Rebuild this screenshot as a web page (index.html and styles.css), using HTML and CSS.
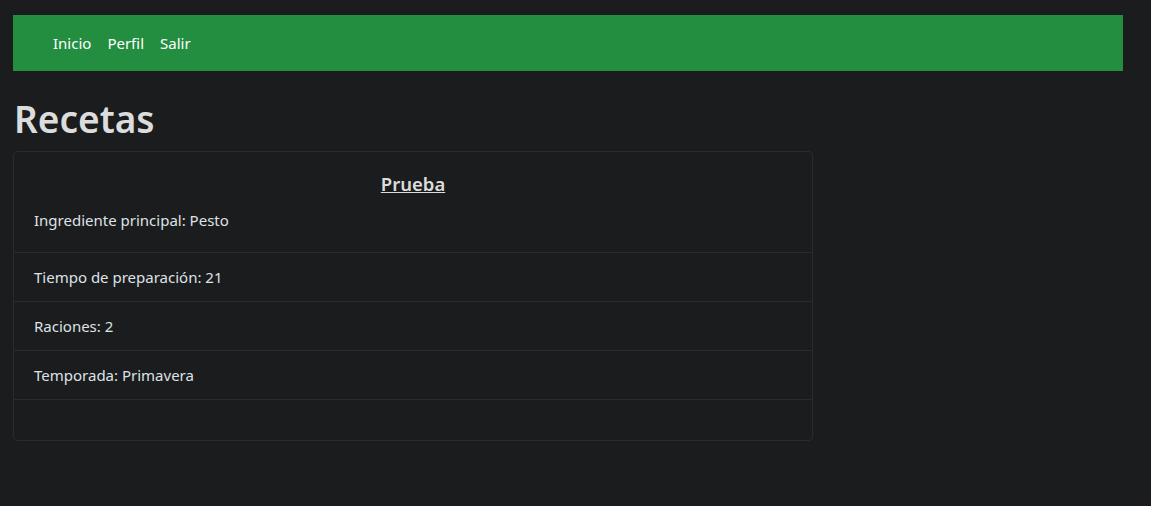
FILE: index.html
```html
<!DOCTYPE html>
<html lang="es">
<head>
<meta charset="utf-8">
<title>Recetas</title>
<link rel="stylesheet" href="styles.css">
</head>
<body>
<div class="page">
  <nav class="navbar">
    <a class="nav-link" href="#">Inicio</a>
    <a class="nav-link" href="#">Perfil</a>
    <a class="nav-link" href="#">Salir</a>
  </nav>
  <h1 class="title">Recetas</h1>
  <div class="card">
    <div class="card-body">
      <h5 class="card-title"><a href="#">Prueba</a></h5>
      <p class="card-text">Ingrediente principal: Pesto</p>
    </div>
    <ul class="list-group">
      <li class="list-item">Tiempo de preparación: 21</li>
      <li class="list-item">Raciones: 2</li>
      <li class="list-item">Temporada: Primavera</li>
    </ul>
    <div class="card-footer"></div>
  </div>
</div>
</body>
</html>
```

FILE: styles.css
```css
* { box-sizing: border-box; }
html, body {
  margin: 0;
  padding: 0;
  background: #1b1c1e;
}
body {
  font-family: "Noto Sans", "Open Sans", sans-serif;
  font-size: 15px;
  line-height: 24px;
  color: #dee2e6;
}
.page {
  width: 1110px;
  margin: 15px 0 0 13px;
}
.navbar {
  background: #238e3f;
  height: 56px;
  display: flex;
  align-items: center;
  padding-left: 32px;
}
.nav-link {
  color: #ffffff;
  text-decoration: none;
  padding: 0 8px;
}
.title {
  font-size: 37px;
  line-height: 48px;
  font-weight: 600;
  color: #dcdcdc;
  margin: 24px 0 8px 1px;
}
.card {
  width: 800px;
  border: 1px solid #2a2b2e;
  border-radius: 4px;
  background: #1b1c1e;
}
.card-body {
  padding: 20px;
}
.card-title {
  margin: 0 0 12px;
  font-size: 18.5px;
  line-height: 24px;
  font-weight: 600;
  text-align: center;
}
.card-title a {
  color: #dcdcdc;
  text-decoration: underline;
}
.card-text {
  margin: 0;
}
.list-group {
  list-style: none;
  margin: 0;
  padding: 0;
}
.list-item {
  padding: 12px 20px;
  border-top: 1px solid #2a2b2e;
}
.list-item:last-child {
  border-bottom: 1px solid #2a2b2e;
}
.card-footer {
  height: 40px;
}
```
